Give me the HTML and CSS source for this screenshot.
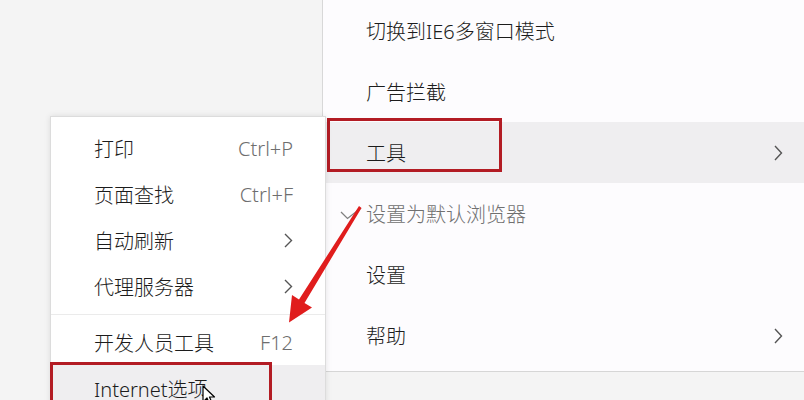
FILE: index.html
```html
<!DOCTYPE html>
<html lang="zh-CN">

<head>
    <meta charset="UTF-8">
    <meta name="viewport" content="width=device-width, initial-scale=1.0">
    <title>浏览器菜单 - Internet选项</title>
    <link rel="stylesheet" href="styles.css">
</head>

<body>
    <div class="desk">
        <!-- 工具 submenu -->
        <div class="submenu">
            <div class="item">
                <span>打印</span>
                <span class="key">Ctrl+P</span>
            </div>
            <div class="item">
                <span>页面查找</span>
                <span class="key">Ctrl+F</span>
            </div>
            <div class="item">
                <span>自动刷新</span>
                <svg class="chev" width="9" height="15" viewBox="0 0 9 15"><path d="M1 1 L7.5 7.5 L1 14" /></svg>
            </div>
            <div class="item">
                <span>代理服务器</span>
                <svg class="chev" width="9" height="15" viewBox="0 0 9 15"><path d="M1 1 L7.5 7.5 L1 14" /></svg>
            </div>
            <div class="sep"></div>
            <div class="item">
                <span>开发人员工具</span>
                <span class="key">F12</span>
            </div>
            <div class="item active boxed">
                <span>Internet选项</span>
            </div>
        </div>

        <!-- main menu -->
        <div class="mainmenu">
            <div class="row">
                <span>切换到IE6多窗口模式</span>
            </div>
            <div class="row">
                <span>广告拦截</span>
            </div>
            <div class="row active boxed">
                <span>工具</span>
                <svg class="chev" width="9" height="16" viewBox="0 0 9 16"><path d="M1 1 L7.5 8 L1 15" /></svg>
            </div>
            <div class="row checked">
                <svg class="check" width="22" height="14" viewBox="0 0 22 14"><path d="M1 5 L7.5 11.5 L21 1" /></svg>
                <span>设置为默认浏览器</span>
            </div>
            <div class="row">
                <span>设置</span>
            </div>
            <div class="row">
                <span>帮助</span>
                <svg class="chev" width="9" height="16" viewBox="0 0 9 16"><path d="M1 1 L7.5 8 L1 15" /></svg>
            </div>
        </div>
    </div>

    <!-- red annotation arrow -->
    <svg class="arrow" width="804" height="400" viewBox="0 0 804 400">
        <polygon points="359,206 361.5,208 304.5,303 312,307.5 289,322.5 292,295 299,299.5" />
    </svg>

    <!-- mouse pointer -->
    <svg class="pointer" width="14" height="22" viewBox="0 0 14 22">
        <path d="M1 1 L1 17 L5 13 L8 20 L10.5 19 L7.5 12 L12.5 12 Z" />
    </svg>
</body>

</html>
```

FILE: styles.css
```css
/* Page */
body {
    margin: 0;
    width: 804px;
    height: 400px;
    overflow: hidden;
    position: relative;
    background-color: #f4f4f4;
    font-family: "Noto Sans", "Noto Sans CJK SC", sans-serif;
    font-size: 20px;
    font-weight: 300;
    color: #1c1c1c;
}

/* Desk holding the two menus */
.desk {
    display: flex;
    align-items: flex-start;
    padding-left: 50px;
}

/* Submenu (left) */
.submenu {
    box-sizing: border-box;
    width: 276px;
    margin-top: 116px;
    padding: 8px 0;
    background-color: #ffffff;
    border: 1px solid #dcdcdc;
    box-shadow: 0 0 6px rgba(0, 0, 0, 0.1);
    position: relative;
    z-index: 2;
}

.item {
    height: 46px;
    display: flex;
    align-items: center;
    justify-content: space-between;
    padding: 0 32px 0 43px;
    position: relative;
}

.key {
    color: #6e6e6e;
}

.sep {
    height: 10px;
    display: flex;
    align-items: center;
}

.sep::before {
    content: "";
    flex: 1;
    height: 1px;
    background-color: #ebebeb;
}

/* Main menu (right) */
.mainmenu {
    flex: 1;
    height: 372px;
    box-sizing: border-box;
    margin-left: -4px;
    padding-bottom: 6px;
    background-color: #fdfcfe;
    border-left: 1px solid #d8d8d8;
    border-bottom: 1px solid #d6d6d6;
}

.row {
    height: 61px;
    display: flex;
    align-items: center;
    justify-content: space-between;
    padding: 0 21px 0 43px;
    position: relative;
}

.row.checked {
    justify-content: flex-start;
    gap: 4px;
    padding-left: 17px;
    color: #707070;
}

/* Hover state */
.active {
    background-color: #efeef0;
}

/* Red annotation boxes */
.boxed::after {
    content: "";
    position: absolute;
    border: 3px solid #b31c24;
}

.row.boxed::after {
    left: 4px;
    top: -4px;
    width: 169px;
    height: 48px;
}

.item.boxed::after {
    left: -1px;
    top: -3px;
    width: 216px;
    height: 60px;
}

/* Icons */
.chev path {
    fill: none;
    stroke: #555555;
    stroke-width: 1.4;
}

.check path {
    fill: none;
    stroke: #808080;
    stroke-width: 1.3;
}

.arrow {
    position: absolute;
    left: 0;
    top: 0;
    z-index: 3;
}

.arrow polygon {
    fill: #e01d1d;
}

.pointer {
    position: absolute;
    left: 202px;
    top: 385px;
    z-index: 4;
}

.pointer path {
    fill: #ffffff;
    stroke: #000000;
    stroke-width: 1.2;
    stroke-linejoin: round;
}
```
